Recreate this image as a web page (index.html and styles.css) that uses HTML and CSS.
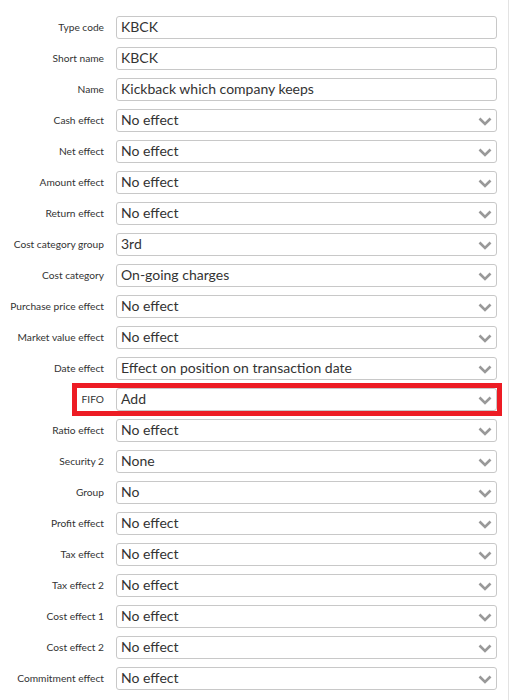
FILE: index.html
```html
<!DOCTYPE html>
<html>
<head>
<meta charset="utf-8">
<link rel="stylesheet" href="styles.css">
</head>
<body>
<div class="panel">
  <form class="form">
    <div class="row"><label class="lbl">Type code</label><div class="field">KBCK</div></div>
    <div class="row"><label class="lbl">Short name</label><div class="field">KBCK</div></div>
    <div class="row"><label class="lbl">Name</label><div class="field">Kickback which company keeps</div></div>
    <div class="row"><label class="lbl">Cash effect</label><div class="field select">No effect<svg class="chev" viewBox="0 0 14 9"><path d="M1.5 1.5 L7 7 L12.5 1.5" /></svg></div></div>
    <div class="row"><label class="lbl">Net effect</label><div class="field select">No effect<svg class="chev" viewBox="0 0 14 9"><path d="M1.5 1.5 L7 7 L12.5 1.5" /></svg></div></div>
    <div class="row"><label class="lbl">Amount effect</label><div class="field select">No effect<svg class="chev" viewBox="0 0 14 9"><path d="M1.5 1.5 L7 7 L12.5 1.5" /></svg></div></div>
    <div class="row"><label class="lbl">Return effect</label><div class="field select">No effect<svg class="chev" viewBox="0 0 14 9"><path d="M1.5 1.5 L7 7 L12.5 1.5" /></svg></div></div>
    <div class="row"><label class="lbl">Cost category group</label><div class="field select">3rd<svg class="chev" viewBox="0 0 14 9"><path d="M1.5 1.5 L7 7 L12.5 1.5" /></svg></div></div>
    <div class="row"><label class="lbl">Cost category</label><div class="field select">On-going charges<svg class="chev" viewBox="0 0 14 9"><path d="M1.5 1.5 L7 7 L12.5 1.5" /></svg></div></div>
    <div class="row"><label class="lbl">Purchase price effect</label><div class="field select">No effect<svg class="chev" viewBox="0 0 14 9"><path d="M1.5 1.5 L7 7 L12.5 1.5" /></svg></div></div>
    <div class="row"><label class="lbl">Market value effect</label><div class="field select">No effect<svg class="chev" viewBox="0 0 14 9"><path d="M1.5 1.5 L7 7 L12.5 1.5" /></svg></div></div>
    <div class="row"><label class="lbl">Date effect</label><div class="field select">Effect on position on transaction date<svg class="chev" viewBox="0 0 14 9"><path d="M1.5 1.5 L7 7 L12.5 1.5" /></svg></div></div>
    <div class="row highlighted"><span class="mark"></span><label class="lbl">FIFO</label><div class="field select">Add<svg class="chev" viewBox="0 0 14 9"><path d="M1.5 1.5 L7 7 L12.5 1.5" /></svg></div></div>
    <div class="row"><label class="lbl">Ratio effect</label><div class="field select">No effect<svg class="chev" viewBox="0 0 14 9"><path d="M1.5 1.5 L7 7 L12.5 1.5" /></svg></div></div>
    <div class="row"><label class="lbl">Security 2</label><div class="field select">None<svg class="chev" viewBox="0 0 14 9"><path d="M1.5 1.5 L7 7 L12.5 1.5" /></svg></div></div>
    <div class="row"><label class="lbl">Group</label><div class="field select">No<svg class="chev" viewBox="0 0 14 9"><path d="M1.5 1.5 L7 7 L12.5 1.5" /></svg></div></div>
    <div class="row"><label class="lbl">Profit effect</label><div class="field select">No effect<svg class="chev" viewBox="0 0 14 9"><path d="M1.5 1.5 L7 7 L12.5 1.5" /></svg></div></div>
    <div class="row"><label class="lbl">Tax effect</label><div class="field select">No effect<svg class="chev" viewBox="0 0 14 9"><path d="M1.5 1.5 L7 7 L12.5 1.5" /></svg></div></div>
    <div class="row"><label class="lbl">Tax effect 2</label><div class="field select">No effect<svg class="chev" viewBox="0 0 14 9"><path d="M1.5 1.5 L7 7 L12.5 1.5" /></svg></div></div>
    <div class="row"><label class="lbl">Cost effect 1</label><div class="field select">No effect<svg class="chev" viewBox="0 0 14 9"><path d="M1.5 1.5 L7 7 L12.5 1.5" /></svg></div></div>
    <div class="row"><label class="lbl">Cost effect 2</label><div class="field select">No effect<svg class="chev" viewBox="0 0 14 9"><path d="M1.5 1.5 L7 7 L12.5 1.5" /></svg></div></div>
    <div class="row"><label class="lbl">Commitment effect</label><div class="field select">No effect<svg class="chev" viewBox="0 0 14 9"><path d="M1.5 1.5 L7 7 L12.5 1.5" /></svg></div></div>
  </form>
</div>
</body>
</html>
```
FILE: styles.css
```css
* { box-sizing: border-box; }
html, body { margin: 0; padding: 0; background: #fff; }
body { font-family: Lato, "Open Sans", sans-serif; color: #333; }
.panel {
  width: 509px;
  height: 700px;
  border-right: 1px solid #e3e3e3;
  overflow: hidden;
}
.form {
  display: flex;
  flex-direction: column;
  gap: 8px;
  padding: 16px 0 0 0;
}
.row {
  position: relative;
  display: flex;
  align-items: center;
  height: 23px;
}
.lbl {
  width: 104px;
  flex: none;
  text-align: right;
  font-size: 10.2px;
  color: #333;
  padding-bottom: 2px;
}
.field {
  margin-left: 12px;
  width: 381px;
  height: 23px;
  border: 1px solid #c8c8c8;
  border-radius: 3px;
  font-size: 14px;
  line-height: 19px;
  padding-left: 4px;
  color: #333;
  position: relative;
  white-space: nowrap;
}
.chev {
  position: absolute;
  right: 4px;
  top: 7px;
  width: 14px;
  height: 9px;
  fill: none;
  stroke: #999;
  stroke-width: 2.6;
}
.mark {
  position: absolute;
  left: 72px;
  top: -5px;
  width: 430px;
  height: 33px;
  border: 5px solid #ed1c24;
  pointer-events: none;
}
```
